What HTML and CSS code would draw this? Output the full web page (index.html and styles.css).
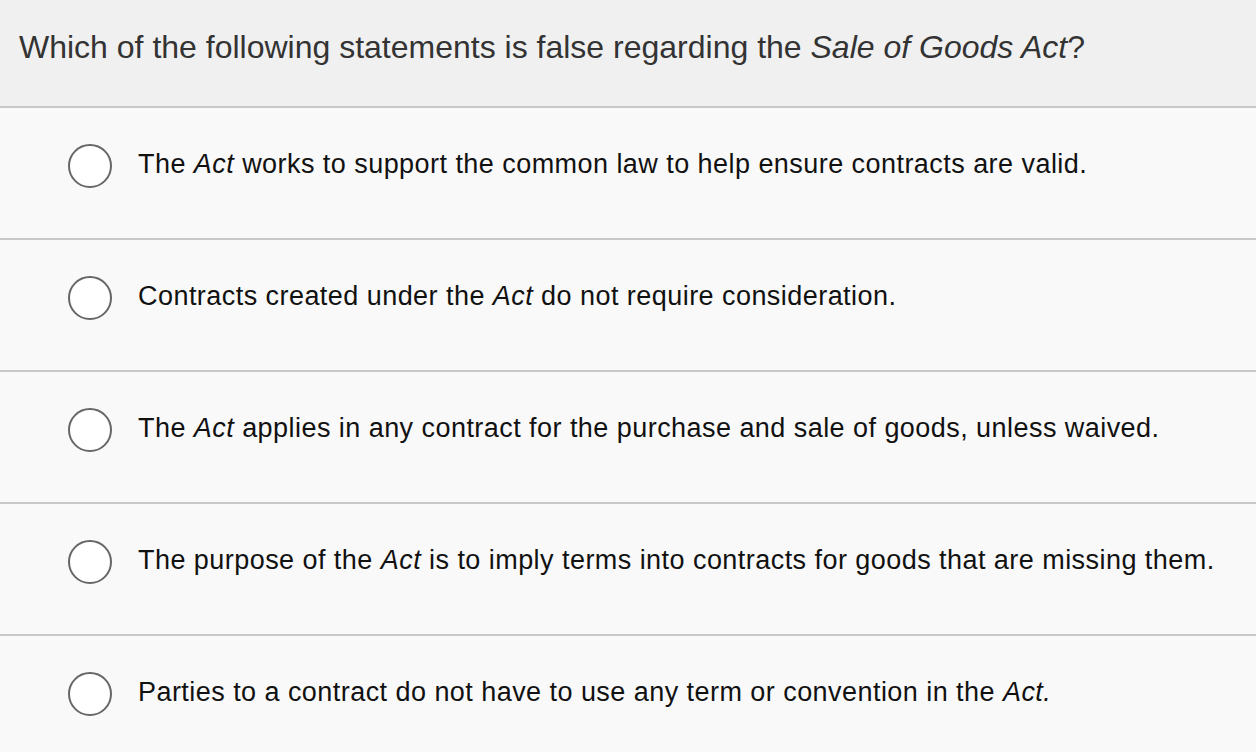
FILE: index.html
```html
<!DOCTYPE html>
<html lang="en">
<head>
<meta charset="utf-8">
<title>Question</title>
<link rel="stylesheet" href="styles.css">
</head>
<body>
<div class="question">
  <div class="prompt">Which of the following statements is false regarding the <em>Sale of Goods Act</em>?</div>
  <ul class="options">
    <li class="option"><span class="radio"></span><span class="label">The <em>Act</em> works to support the common law to help ensure contracts are valid.</span></li>
    <li class="option"><span class="radio"></span><span class="label">Contracts created under the <em>Act</em> do not require consideration.</span></li>
    <li class="option"><span class="radio"></span><span class="label">The <em>Act</em> applies in any contract for the purchase and sale of goods, unless waived.</span></li>
    <li class="option"><span class="radio"></span><span class="label">The purpose of the <em>Act</em> is to imply terms into contracts for goods that are missing them.</span></li>
    <li class="option"><span class="radio"></span><span class="label">Parties to a contract do not have to use any term or convention in the <em>Act.</em></span></li>
  </ul>
</div>
</body>
</html>
```
FILE: styles.css
```css
html, body {
  margin: 0;
  padding: 0;
  background: #f9f9f9;
  font-family: "Liberation Sans", Arial, Helvetica, sans-serif;
}
.question {
  width: 1256px;
  height: 752px;
  overflow: hidden;
}
.prompt {
  box-sizing: border-box;
  height: 108px;
  padding: 28px 0 0 19px;
  background: #f0f0f0;
  border-bottom: 2px solid #c8c8c8;
  color: #333;
  font-size: 32px;
  line-height: 38px;
  white-space: nowrap;
}
.options {
  list-style: none;
  margin: 0;
  padding: 0;
}
.option {
  box-sizing: border-box;
  height: 132px;
  display: flex;
  align-items: flex-start;
  padding: 36px 0 0 68px;
  border-bottom: 2px solid #c8c8c8;
}
.radio {
  box-sizing: border-box;
  flex: none;
  width: 44px;
  height: 44px;
  border: 2px solid #666;
  border-radius: 50%;
  background: #fff;
}
.label {
  margin: 5px 0 0 26px;
  font-size: 27px;
  line-height: 30px;
  letter-spacing: 0.45px;
  color: #111;
  white-space: nowrap;
}
em {
  font-style: italic;
}
```
